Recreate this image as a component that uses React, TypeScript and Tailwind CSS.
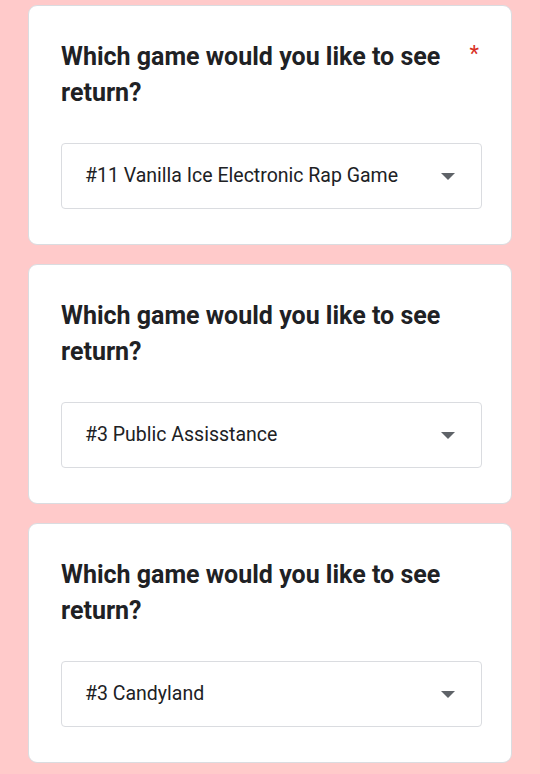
const questions = [
  { answer: "#11 Vanilla Ice Electronic Rap Game", required: true },
  { answer: "#3 Public Assisstance", required: false },
  { answer: "#3 Candyland", required: false },
];

function Question({ answer, required }: { answer: string; required: boolean }) {
  return (
    <div className="bg-white border border-[#dadce0] rounded-[9px] pt-[33px] pb-[35px] pl-[32px] pr-[30px]">
      <div className="flex items-start">
        <h2 className="flex-1 text-[25px] leading-[36px] font-bold text-[#202124] pr-[20px]">
          Which game would you like to see return?
        </h2>
        {required && (
          <span className="text-[#d93025] text-[22px] leading-[30px] mr-[2px]">*</span>
        )}
      </div>
      <div className="mt-[32px] h-[66px] border border-[#dadce0] rounded-[4px] flex items-center pl-[23px] pr-[26px] mr-[-1px]">
        <span className="flex-1 text-[19.5px] text-[#202124]">{answer}</span>
        <svg width="14" height="7" viewBox="0 0 14 7" className="text-[#5f6368]">
          <path d="M0 0 L14 0 L7 7 Z" fill="currentColor" />
        </svg>
      </div>
    </div>
  );
}

export default function App() {
  return (
    <div
      className="min-h-screen bg-[#ffcaca] px-[28px] pt-[5px] flex flex-col gap-[19px]"
      style={{ fontFamily: "Roboto, 'Liberation Sans', sans-serif" }}
    >
      {questions.map((q, i) => (
        <Question key={i} {...q} />
      ))}
    </div>
  );
}
